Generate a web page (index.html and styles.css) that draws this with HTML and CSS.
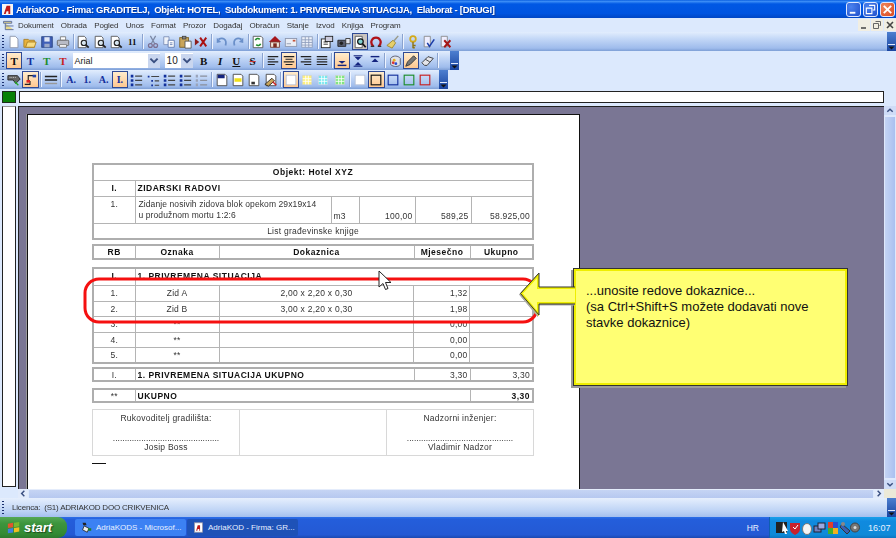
FILE: index.html
```html
<!DOCTYPE html>
<html lang="hr">
<head>
<meta charset="utf-8">
<title>AdriaKOD</title>
<link rel="stylesheet" href="styles.css">
</head>
<body>
<svg class="sprite" xmlns="http://www.w3.org/2000/svg">
<symbol id="new" viewBox="0 0 16 16"><path d="M3.500 1.500h6l3 3v10h-9z" fill="#fff" stroke="#8a93a8"/></symbol>
<symbol id="open" viewBox="0 0 16 16"><path d="M1 5h5l1 1h6v8H1z" fill="#e8b23c" stroke="#a97f24"/><path d="M3 14l2-6h10l-2 6z" fill="#f8dc80" stroke="#a97f24"/></symbol>
<symbol id="save" viewBox="0 0 16 16"><rect x="2" y="2" width="12" height="12" fill="#3f5fb8" stroke="#26407f"/><rect x="5" y="2.500" width="6" height="5" fill="#dfe6f5"/><rect x="5" y="10" width="6" height="4" fill="#9aa8c8"/></symbol>
<symbol id="print" viewBox="0 0 16 16"><path d="M5 2h6v4H5z" fill="#fff" stroke="#777"/><rect x="1.500" y="6" width="13" height="6" rx="1" fill="#b9bcc6" stroke="#666"/><path d="M4 11h8v3H4z" fill="#fff" stroke="#777"/></symbol>
<symbol id="prev" viewBox="0 0 16 16"><path d="M2.500 1.500h7l2 2v11h-9z" fill="#fff" stroke="#555"/><circle cx="9" cy="9" r="3" fill="#d8e6f0" stroke="#222" stroke-width="1.300"/><path d="M11 11l3.500 3.500" stroke="#222" stroke-width="2"/></symbol>
<symbol id="cut" viewBox="0 0 16 16"><path d="M5 1l5 9M11 1L6 10" stroke="#7c88a4" stroke-width="1.400" fill="none"/><circle cx="5" cy="12" r="2.200" fill="none" stroke="#7c6f90" stroke-width="1.400"/><circle cx="11" cy="12" r="2.200" fill="none" stroke="#7c6f90" stroke-width="1.400"/></symbol>
<symbol id="copy" viewBox="0 0 16 16"><path d="M2 2h6v9H2z" fill="#eef2fa" stroke="#7d8fb5"/><path d="M7 6h7v8H7z" fill="#fff" stroke="#5f78ad"/><path d="M9 9h3M9 11h3" stroke="#5f78ad"/></symbol>
<symbol id="paste" viewBox="0 0 16 16"><rect x="2" y="3" width="10" height="11" fill="#c9a55b" stroke="#7c6224"/><rect x="5" y="1.500" width="4" height="3" fill="#888" stroke="#444"/><path d="M8 7h7v8H8z" fill="#fff" stroke="#555"/></symbol>
<symbol id="del" viewBox="0 0 16 16"><path d="M1 4l5 4-5 4z" fill="#8c1c1c"/><path d="M7 3l7 10M14 3L7 13" stroke="#a11" stroke-width="2.200"/></symbol>
<symbol id="undo" viewBox="0 0 16 16"><path d="M4 5c5-3 10 0 8 7" fill="none" stroke="#6a8fc9" stroke-width="2"/><path d="M2 3v6l5-1z" fill="#6a8fc9"/></symbol>
<symbol id="redo" viewBox="0 0 16 16"><path d="M12 5C7 2 2 5 4 12" fill="none" stroke="#6a8fc9" stroke-width="2"/><path d="M14 3v6L9 8z" fill="#6a8fc9"/></symbol>
<symbol id="refresh" viewBox="0 0 16 16"><path d="M2.500 1.500h9l2 2v11h-11z" fill="#fff" stroke="#555"/><path d="M5 6a3 3 0 0 1 5-1M11 10a3 3 0 0 1-5 1" fill="none" stroke="#1c8d2a" stroke-width="1.800"/></symbol>
<symbol id="home" viewBox="0 0 16 16"><path d="M8 1L1 8h14z" fill="#a5161c"/><rect x="3" y="8" width="10" height="6" fill="#efe6d8" stroke="#7a3a30"/><rect x="6" y="9.500" width="4" height="4.500" fill="#7a2a20"/></symbol>
<symbol id="mail" viewBox="0 0 16 16"><rect x="1.500" y="4" width="13" height="9" fill="#e9edf6" stroke="#8c96ac"/><rect x="10" y="5.500" width="3" height="2" fill="#c6553c"/><path d="M3 10h5" stroke="#8c96ac"/></symbol>
<symbol id="table" viewBox="0 0 16 16"><rect x="2" y="2" width="12" height="12" fill="#eef2fa" stroke="#8e9dbb"/><path d="M2 5.500h12M2 8.500h12M2 11.500h12M6 2v12M10 2v12" stroke="#8e9dbb"/></symbol>
<symbol id="props" viewBox="0 0 16 16"><rect x="1.500" y="4.500" width="10" height="10" fill="#fff" stroke="#222"/><rect x="6" y="1.500" width="8.500" height="6" fill="#ccd" stroke="#222"/><path d="M4 8h5M4 10.500h5" stroke="#222"/></symbol>
<symbol id="cam" viewBox="0 0 16 16"><path d="M1 6h9v7H1z" fill="#5a5f70" stroke="#222"/><path d="M10 4h5v6h-5z" fill="#e4e6ee" stroke="#333"/><circle cx="5" cy="9.500" r="2" fill="#222"/></symbol>
<symbol id="search" viewBox="0 0 16 16"><path d="M2.500 1.500h8v13h-8z" fill="#fff" stroke="#555"/><circle cx="8.500" cy="7.500" r="3.200" fill="#7fd0d0" stroke="#111" stroke-width="1.400"/><path d="M11 10l3.500 4" stroke="#111" stroke-width="2"/></symbol>
<symbol id="omega" viewBox="0 0 16 16"><path d="M5 13C0 8 4 3 8 3s8 5 3 10" fill="none" stroke="#b01218" stroke-width="2.600"/><path d="M2 13h4M10 13h4" stroke="#333" stroke-width="1.600"/></symbol>
<symbol id="broom" viewBox="0 0 16 16"><path d="M14 1L8 8" stroke="#998" stroke-width="1.600"/><path d="M8 6l3 3-4 6-6-3z" fill="#e6cf6a" stroke="#9b8630"/></symbol>
<symbol id="key" viewBox="0 0 16 16"><circle cx="8" cy="4.500" r="3.200" fill="none" stroke="#d3a91a" stroke-width="2"/><path d="M8 8v7M8 12h3M8 14.500h2" stroke="#8d7312" stroke-width="1.600"/></symbol>
<symbol id="check" viewBox="0 0 16 16"><path d="M2.500 1.500h7v12h-7z" fill="#eef" stroke="#888"/><path d="M6 9l2.500 4L14 5" fill="none" stroke="#1c3da8" stroke-width="1.800"/></symbol>
<symbol id="xdoc" viewBox="0 0 16 16"><path d="M2.500 1.500h7v12h-7z" fill="#eef" stroke="#888"/><path d="M6 6l7 8M13 6l-7 8" stroke="#a51616" stroke-width="2.200"/></symbol>
<symbol id="al" viewBox="0 0 16 16"><path d="M2 3h12M2 6h8M2 9h12M2 12h8" stroke="#222" stroke-width="1.300"/></symbol>
<symbol id="ac" viewBox="0 0 16 16"><path d="M2 3h12M4 6h8M2 9h12M4 12h8" stroke="#222" stroke-width="1.300"/></symbol>
<symbol id="ar" viewBox="0 0 16 16"><path d="M2 3h12M6 6h8M2 9h12M6 12h8" stroke="#222" stroke-width="1.300"/></symbol>
<symbol id="aj" viewBox="0 0 16 16"><path d="M2 3h12M2 6h12M2 9h12M2 12h12" stroke="#222" stroke-width="1.300"/></symbol>
<symbol id="vb" viewBox="0 0 16 16"><path d="M3 13h10" stroke="#14247e" stroke-width="1.600"/><path d="M4 8h8l-4 3z" fill="#14247e"/></symbol>
<symbol id="vm" viewBox="0 0 16 16"><path d="M3 2h10M3 14h10" stroke="#14247e" stroke-width="1.400"/><path d="M8 7L4 3h8zM8 9l4 4H4z" fill="#14247e"/></symbol>
<symbol id="vt" viewBox="0 0 16 16"><path d="M3 3h10" stroke="#14247e" stroke-width="1.600"/><path d="M4 9h8L8 5z" fill="#14247e"/></symbol>
<symbol id="color" viewBox="0 0 16 16"><path d="M3 5c3-4 9-3 11 0v7c-2 3-8 3-11 0z" fill="#dfe3ea" stroke="#556"/><circle cx="6" cy="10" r="1.600" fill="#d33"/><circle cx="9" cy="11" r="1.600" fill="#2a4fd0"/><circle cx="7" cy="7" r="1.600" fill="#e8b020"/></symbol>
<symbol id="pen" viewBox="0 0 16 16"><path d="M2 14l2-5 7-7 3 3-7 7z" fill="#777" stroke="#333"/></symbol>
<symbol id="erase" viewBox="0 0 16 16"><path d="M1 10l7-7 6 2-7 8H4z" fill="#e5e5ea" stroke="#333"/><path d="M5 6l5 3" stroke="#333"/></symbol>
<symbol id="stamp" viewBox="0 0 16 16"><path d="M1 3h11l3 4-5 5-3-4H1z" fill="#666" stroke="#222"/><path d="M3 5h7" stroke="#ddd" stroke-dasharray="1 1"/><path d="M9 10l4 4" stroke="#2a2" stroke-width="1.400"/></symbol>
<symbol id="tree" viewBox="0 0 16 16"><path d="M6 9V3h8M2 13h6v-4" fill="none" stroke="#222" stroke-width="1.300"/><rect x="4" y="8" width="4" height="3" fill="#d22"/><rect x="11" y="2" width="4" height="3" fill="#2244a8"/></symbol>
<symbol id="lines" viewBox="0 0 16 16"><path d="M1 4h14M1 8h14" stroke="#222" stroke-width="1.600"/><path d="M1 12h14" stroke="#999" stroke-width="1.600"/></symbol>
<symbol id="l1" viewBox="0 0 16 16"><path d="M2 2h3v3H2zM2 7h3v3H2zM2 12h3v3H2z" fill="#12309c"/><path d="M7 3.500h8M7 8.500h8M7 13.500h8" stroke="#444" stroke-width="1.300"/></symbol>
<symbol id="l2" viewBox="0 0 16 16"><path d="M2 3h2v2H2zM6 8h2v2H6zM6 13h2v2H6z" fill="#12309c"/><path d="M6 4h9M10 9h5M10 14h5" stroke="#444" stroke-width="1.300"/></symbol>
<symbol id="l3" viewBox="0 0 16 16"><path d="M2 2h2.500v3H2zM2 7h2.500v3H2zM2 12h2.500v3H2z" fill="#9aa3b8"/><path d="M7 3.500h8M7 8.500h8M7 13.500h8" stroke="#8a8f9c" stroke-width="1.300"/></symbol>
<symbol id="d1" viewBox="0 0 16 16"><path d="M2.500 1.500h9l2 2v11h-11z" fill="#fff" stroke="#444"/><rect x="3" y="2" width="8" height="4" fill="#14247e"/></symbol>
<symbol id="d2" viewBox="0 0 16 16"><path d="M2.500 1.500h9l2 2v11h-11z" fill="#fff" stroke="#444"/><rect x="4" y="6" width="8" height="4" fill="#f0e01a"/></symbol>
<symbol id="d3" viewBox="0 0 16 16"><path d="M2.500 1.500h9l2 2v11h-11z" fill="#fff" stroke="#444"/><rect x="5" y="10" width="4" height="3" fill="#333"/></symbol>
<symbol id="d4" viewBox="0 0 16 16"><path d="M2.500 1.500h9l2 2v11h-11z" fill="#fff" stroke="#444"/><path d="M1 13l8-7 3 3-7 6z" fill="#c9a55b" stroke="#222"/><path d="M10 10l4 4" stroke="#c22" stroke-width="1.600"/></symbol>
<symbol id="fill" viewBox="0 0 16 16"><rect x="2.500" y="2.500" width="11" height="11" fill="#fff" stroke="#b8c2d8"/></symbol>
<symbol id="fy" viewBox="0 0 16 16"><rect x="3" y="3" width="10" height="10" fill="#fff27a" stroke="#d8d8c0"/><path d="M6.500 3v10M9.500 3v10M3 6.500h10M3 9.500h10" stroke="#fff"/></symbol>
<symbol id="fc" viewBox="0 0 16 16"><rect x="3" y="3" width="10" height="10" fill="#6fe8f0" stroke="#c8d8e0"/><path d="M6.500 3v10M9.500 3v10M3 6.500h10M3 9.500h10" stroke="#fff"/></symbol>
<symbol id="fg" viewBox="0 0 16 16"><rect x="3" y="3" width="10" height="10" fill="#7ce87c" stroke="#c8d8c8"/><path d="M6.500 3v10M9.500 3v10M3 6.500h10M3 9.500h10" stroke="#fff"/></symbol>
<symbol id="bk" viewBox="0 0 16 16"><rect x="2.500" y="2.500" width="11" height="11" fill="none" stroke="#111" stroke-width="1.300"/></symbol>
<symbol id="bb" viewBox="0 0 16 16"><rect x="2.500" y="2.500" width="11" height="11" fill="none" stroke="#14309c" stroke-width="1.300"/></symbol>
<symbol id="bg" viewBox="0 0 16 16"><rect x="2.500" y="2.500" width="11" height="11" fill="none" stroke="#1c8d2a" stroke-width="1.300"/></symbol>
<symbol id="br" viewBox="0 0 16 16"><rect x="2.500" y="2.500" width="11" height="11" fill="none" stroke="#c81e1e" stroke-width="1.300"/></symbol>
<symbol id="chev" viewBox="0 0 9 18"><path d="M1 12h7" stroke="#dfe8fb"/><path d="M1.500 14h6L4.500 17z" fill="#111"/></symbol>
</svg>

<header class="titlebar">
  <svg class="appicon" viewBox="0 0 12 12"><rect width="12" height="12" fill="#f5f5f5"/><path d="M2 11l3-9h4v9H7V8H5l-1 3z" fill="#c01818"/></svg>
  <span class="title">AdriaKOD - Firma: GRADITELJ,  Objekt: HOTEL,  Subdokument: 1. PRIVREMENA SITUACIJA,  Elaborat - [DRUGI]</span>
  <div class="winbtns">
    <span class="wb"><svg viewBox="0 0 14 14"><path d="M3 10.500h6" stroke="#fff" stroke-width="2"/></svg></span>
    <span class="wb"><svg viewBox="0 0 14 14"><path d="M5.500 2.500h6v5h-2M2.500 5.500h6v6h-6z" fill="none" stroke="#fff" stroke-width="1.200"/></svg></span>
    <span class="wb close"><svg viewBox="0 0 14 14"><path d="M3 3l8 8M11 3l-8 8" stroke="#fff" stroke-width="2"/></svg></span>
  </div>
</header>

<nav class="menubar">
  <svg class="menuicon" viewBox="0 0 12 12"><path d="M.5 1.500h9v2h-9zM2.500 3.500v7h9M2.500 6.500h9" fill="#e8d98c" stroke="#5a6b9c"/></svg>
  <span class="m m1">Dokument</span><span class="m">Obrada</span><span class="m">Pogled</span><span class="m">Unos</span><span class="m">Format</span><span class="m">Prozor</span><span class="m">Događaj</span><span class="m">Obračun</span><span class="m">Stanje</span><span class="m">Izvod</span><span class="m">Knjiga</span><span class="m">Program</span>
  <div class="mdibtns">
    <span class="mdi"><svg viewBox="0 0 12 12"><path d="M3 9h5" stroke="#444" stroke-width="1.500"/></svg></span>
    <span class="mdi"><svg viewBox="0 0 12 12"><path d="M4.500 2.500h5v4h-1M2.500 4.500h5v5h-5z" fill="none" stroke="#666"/></svg></span>
    <span class="mdi"><svg viewBox="0 0 12 12"><path d="M3 3l6 6M9 3l-6 6" stroke="#444" stroke-width="1.600"/></svg></span>
  </div>
</nav>

<div class="tb tb1">
  <i class="grip"></i>
  <span class="b"><svg><use href="#new"/></svg></span><span class="b"><svg><use href="#open"/></svg></span><span class="b"><svg><use href="#save"/></svg></span><span class="b"><svg><use href="#print"/></svg></span><i class="s"></i>
  <span class="b"><svg><use href="#prev"/></svg></span><span class="b"><svg><use href="#prev"/></svg></span><span class="b"><svg><use href="#prev"/></svg></span><span class="b num">11</span><i class="s"></i>
  <span class="b"><svg><use href="#cut"/></svg></span><span class="b"><svg><use href="#copy"/></svg></span><span class="b"><svg><use href="#paste"/></svg></span><span class="b"><svg><use href="#del"/></svg></span><i class="s"></i>
  <span class="b"><svg><use href="#undo"/></svg></span><span class="b"><svg><use href="#redo"/></svg></span><i class="s"></i>
  <span class="b"><svg><use href="#refresh"/></svg></span><span class="b"><svg><use href="#home"/></svg></span><span class="b"><svg><use href="#mail"/></svg></span><span class="b"><svg><use href="#table"/></svg></span><i class="s"></i>
  <span class="b"><svg><use href="#props"/></svg></span><span class="b"><svg><use href="#cam"/></svg></span><span class="b on grey"><svg><use href="#search"/></svg></span><span class="b"><svg><use href="#omega"/></svg></span><span class="b"><svg><use href="#broom"/></svg></span><i class="s"></i>
  <span class="b"><svg><use href="#key"/></svg></span><span class="b"><svg><use href="#check"/></svg></span><span class="b"><svg><use href="#xdoc"/></svg></span>
  <span class="chev end"><svg><use href="#chev"/></svg></span>
</div>

<div class="tb tb2">
  <i class="grip"></i>
  <span class="b on ser">T</span><span class="b ser blue">T</span><span class="b ser green">T</span><span class="b ser red">T</span>
  <span class="sel font"><span class="val">Arial</span><span class="arr"><svg viewBox="0 0 10 10"><path d="M2 3l3 3 3-3" fill="none" stroke="#3a4f80" stroke-width="1.600"/></svg></span></span>
  <span class="sel size"><span class="val">10</span><span class="arr"><svg viewBox="0 0 10 10"><path d="M2 3l3 3 3-3" fill="none" stroke="#3a4f80" stroke-width="1.600"/></svg></span></span>
  <span class="b ser bold">B</span><span class="b ser ital">I</span><span class="b ser und">U</span><span class="b ser str">S</span><i class="s"></i>
  <span class="b"><svg><use href="#al"/></svg></span><span class="b on"><svg><use href="#ac"/></svg></span><span class="b"><svg><use href="#ar"/></svg></span><span class="b"><svg><use href="#aj"/></svg></span><i class="s"></i>
  <span class="b on"><svg><use href="#vb"/></svg></span><span class="b"><svg><use href="#vm"/></svg></span><span class="b"><svg><use href="#vt"/></svg></span><i class="s"></i>
  <span class="b"><svg><use href="#color"/></svg></span><span class="b on"><svg><use href="#pen"/></svg></span><span class="b"><svg><use href="#erase"/></svg></span><i class="s"></i>
  <span class="chev end"><svg><use href="#chev"/></svg></span>
</div>

<div class="tb tb3">
  <i class="grip"></i>
  <span class="b"><svg><use href="#stamp"/></svg></span><span class="b on"><svg><use href="#tree"/></svg></span><i class="s"></i>
  <span class="b"><svg><use href="#lines"/></svg></span><i class="s"></i>
  <span class="b ser blue sm">A.</span><span class="b ser blue sm">1.</span><span class="b ser blue sm">A.</span><span class="b on ser blue sm">I.</span><span class="b"><svg><use href="#l1"/></svg></span><span class="b"><svg><use href="#l2"/></svg></span><span class="b"><svg><use href="#l1"/></svg></span><span class="b"><svg><use href="#l1"/></svg></span><span class="b"><svg><use href="#l3"/></svg></span><i class="s"></i>
  <span class="b"><svg><use href="#d1"/></svg></span><span class="b"><svg><use href="#d2"/></svg></span><span class="b"><svg><use href="#d3"/></svg></span><span class="b"><svg><use href="#d4"/></svg></span><i class="s"></i>
  <span class="b on"><svg><use href="#fill"/></svg></span><span class="b"><svg><use href="#fy"/></svg></span><span class="b"><svg><use href="#fc"/></svg></span><span class="b"><svg><use href="#fg"/></svg></span><i class="s"></i>
  <span class="b"><svg><use href="#fill"/></svg></span><span class="b on"><svg><use href="#bk"/></svg></span><span class="b"><svg><use href="#bb"/></svg></span><span class="b"><svg><use href="#bg"/></svg></span><span class="b"><svg><use href="#br"/></svg></span>
  <span class="chev end"><svg><use href="#chev"/></svg></span>
</div>

<div class="fieldrow"><span class="led"></span><span class="field"></span></div>

<div class="work">
  <div class="ruler"></div>
  <div class="center">
    <main class="canvas">
      <article class="paper">
        <table class="t">
          <colgroup><col class="w42"><col class="w196"><col class="w28"><col class="w56"><col class="w56"><col></colgroup>
          <tr class="h16"><td colspan="6" class="c bd">Objekt: Hotel XYZ</td></tr>
          <tr class="h16"><td class="c bd">I.</td><td colspan="5" class="bd">ZIDARSKI RADOVI</td></tr>
          <tr class="h27"><td class="c top">1.</td><td class="two">Zidanje nosivih zidova blok opekom 29x19x14<br>u produžnom mortu 1:2:6</td><td class="bot">m3</td><td class="r bot">100,00</td><td class="r bot">589,25</td><td class="r bot">58.925,00</td></tr>
          <tr class="h15"><td colspan="6" class="c">List građevinske knjige</td></tr>
        </table>
        <table class="t gap4">
          <colgroup><col class="w42"><col class="w84"><col><col class="w56"><col class="w63"></colgroup>
          <tr class="h14 bd"><td class="c">RB</td><td class="c">Oznaka</td><td class="c">Dokaznica</td><td class="c">Mjesečno</td><td class="c">Ukupno</td></tr>
        </table>
        <table class="t gap7">
          <colgroup><col class="w42"><col class="w84"><col><col class="w56"><col class="w63"></colgroup>
          <tr class="h18"><td class="c bd top">I.</td><td colspan="4" class="bd top">1. PRIVREMENA SITUACIJA</td></tr>
          <tr class="h15"><td class="c">1.</td><td class="c">Zid A</td><td class="c">2,00 x 2,20 x 0,30</td><td class="r">1,32</td><td></td></tr>
          <tr class="h15"><td class="c">2.</td><td class="c">Zid B</td><td class="c">3,00 x 2,20 x 0,30</td><td class="r">1,98</td><td></td></tr>
          <tr class="h15"><td class="c">3.</td><td class="c">**</td><td></td><td class="r">0,00</td><td></td></tr>
          <tr class="h15"><td class="c">4.</td><td class="c">**</td><td></td><td class="r">0,00</td><td></td></tr>
          <tr class="h15"><td class="c">5.</td><td class="c">**</td><td></td><td class="r">0,00</td><td></td></tr>
        </table>
        <table class="t gap3">
          <colgroup><col class="w42"><col><col class="w56"><col class="w63"></colgroup>
          <tr class="h13"><td class="c">I.</td><td class="bd">1. PRIVREMENA SITUACIJA UKUPNO</td><td class="r">3,30</td><td class="r">3,30</td></tr>
        </table>
        <table class="t gap6">
          <colgroup><col class="w42"><col><col class="w63"></colgroup>
          <tr class="h13"><td class="c">**</td><td class="bd">UKUPNO</td><td class="r bd">3,30</td></tr>
        </table>
        <table class="t sign gap6">
          <tr>
            <td class="c"><p>Rukovoditelj gradilišta:</p><p class="dots">.............................................</p><p>Josip Boss</p></td>
            <td></td>
            <td class="c"><p>Nadzorni inženjer:</p><p class="dots">.............................................</p><p>Vladimir Nadzor</p></td>
          </tr>
        </table>
        <div class="rule"></div>
      </article>
    </main>
    <div class="hscroll">
      <span class="sbtn"><svg viewBox="0 0 10 10"><path d="M6.500 2L3.500 5l3 3" fill="none" stroke="#3a4f80" stroke-width="1.600"/></svg></span>
      <span class="hthumb"></span>
      <span class="sbtn"><svg viewBox="0 0 10 10"><path d="M3.500 2l3 3-3 3" fill="none" stroke="#3a4f80" stroke-width="1.600"/></svg></span>
    </div>
  </div>
  <div class="vscroll">
    <span class="vbtn"><svg viewBox="0 0 10 10"><path d="M2 6.500l3-3 3 3" fill="none" stroke="#3a4f80" stroke-width="1.600"/></svg></span>
    <span class="vthumb"></span>
    <span class="vbtn"><svg viewBox="0 0 10 10"><path d="M2 3.500l3 3 3-3" fill="none" stroke="#3a4f80" stroke-width="1.600"/></svg></span>
    <span class="corner"></span>
  </div>
</div>

<div class="status">
  <i class="grip"></i>
  <span class="stext">Licenca:  (S1) ADRIAKOD DOO CRIKVENICA</span>
  <span class="chev end"><svg><use href="#chev"/></svg></span>
</div>

<footer class="taskbar">
  <div class="start">
    <svg class="flag" viewBox="0 0 16 16"><path d="M1 3l6-1v5l-6 1z" fill="#e2552c"/><path d="M8 2l6-1v5l-6 1z" fill="#7ab82e"/><path d="M1 9l6-1v5l-6 1z" fill="#3f7fe0"/><path d="M8 8l6-1v5l-6 1z" fill="#f0c020"/></svg>
    <span>start</span>
  </div>
  <div class="task active">
    <svg viewBox="0 0 14 14"><path d="M2 1h4l1 3H3z" fill="#222"/><path d="M4 5l6 3-2 5-6-3z" fill="#eee" stroke="#222"/><path d="M9 8h4v3H9z" fill="#1c7d2a"/></svg>
    <span>AdriaKODS - Microsof...</span>
  </div>
  <div class="task">
    <svg viewBox="0 0 14 14"><rect x="2" y="1" width="10" height="12" fill="#fff" stroke="#99a"/><path d="M4 11l2-7h3v7H8V9H6l-.5 2z" fill="#c01818"/></svg>
    <span>AdriaKOD - Firma: GR...</span>
  </div>
  <span class="lang">HR</span>
  <div class="tray">
    <svg viewBox="0 0 84 14" class="trayicons">
      <rect x="0" y="1" width="11" height="11" fill="#222"/><path d="M7 1l5 9-2 0 1 3-2 0-1-3-2 1z" fill="#fff"/>
      <path d="M14 2h10v6c0 3-3 5-5 6-2-1-5-3-5-6z" fill="#c8202c"/><path d="M17 6l2 2 3-4" stroke="#fff" fill="none"/>
      <ellipse cx="31" cy="8" rx="4.500" ry="5.500" fill="#f4f4f4" stroke="#777"/>
      <rect x="38" y="5" width="7" height="6" fill="#7080c0" stroke="#223"/><rect x="42" y="2" width="7" height="6" fill="#9aa8e0" stroke="#223"/>
      <rect x="52" y="1" width="5" height="6" fill="#e0402a"/><rect x="57" y="1" width="5" height="6" fill="#2a4fd0"/><rect x="52" y="7" width="5" height="6" fill="#40b030"/><rect x="57" y="7" width="5" height="6" fill="#f0b020"/>
      <path d="M66 3l8 7-3 3-7-7z" fill="#3a5fb0" stroke="#333"/><circle cx="67" cy="3" r="2" fill="#888"/>
      <circle cx="79" cy="6.500" r="4.500" fill="#777" stroke="#444"/><circle cx="79" cy="6.500" r="1.500" fill="#ddd"/>
    </svg>
    <span class="clock">16:07</span>
  </div>
</footer>

<svg class="redbox" viewBox="0 0 456 48"><rect x="2" y="2" width="452" height="43" rx="14" fill="none" stroke="#f51010" stroke-width="3"/></svg>
<svg class="pointer" viewBox="0 0 14 21"><path d="M1 1v16l4-3.500 2.500 6 2.500-1-2.500-6H13z" fill="#fff" stroke="#222"/></svg>
<aside class="callout">...unosite redove dokaznice...<br>(sa Ctrl+Shift+S možete dodavati nove<br>stavke dokaznice)</aside>
<svg class="arrow" viewBox="0 0 56 44"><path d="M1.500 21.500L18 3.500v12.500h38v15H18v10.500z" fill="#ffff73" stroke="#eeee00" stroke-width="2"/><path d="M.5 21.500L19 1v14h36M55 32H19v11L.5 21.500" fill="none" stroke="#333"/></svg>
</body>
</html>
```
FILE: styles.css
```css
*{box-sizing:border-box}
html,body{margin:0;padding:0}
body{width:896px;height:538px;overflow:hidden;position:relative;display:flex;flex-direction:column;background:#dce9fd;font-family:"Liberation Sans",Arial,sans-serif;color:#111}
.sprite{position:absolute;width:0;height:0}
i{display:block;font-style:normal}

.titlebar{height:18px;flex:none;display:flex;align-items:center;padding-left:2px;background:linear-gradient(#0a5fe0 0,#3a8cf6 8%,#0058e4 22%,#0054e0 75%,#0046c4 100%);color:#fff}
.appicon{width:11px;height:11px;flex:none}
.title{margin-left:3px;font-size:9.500px;font-weight:bold;letter-spacing:-.3px;white-space:pre;filter:blur(.25px);text-shadow:1px 1px 0 #0a3a9c}
.winbtns{margin-left:auto;display:flex;gap:2px;padding-right:1px}
.wb{width:15px;height:15px;border:1px solid #dfe8ff;border-radius:3px;background:radial-gradient(circle at 30% 30%,#4b82ee,#2050cc);display:block}
.wb svg{display:block;width:13px;height:13px}
.wb.close{background:radial-gradient(circle at 30% 30%,#ee8a60,#d9441c)}

.menubar{height:14px;flex:none;display:flex;align-items:center;padding-left:3px;font-size:8px;color:#333}
.menuicon{width:11px;height:11px;flex:none}
.m{margin-right:7.200px;white-space:nowrap;letter-spacing:-.1px;filter:blur(.25px)}
.m1{margin-left:4px}
.mdibtns{margin-left:auto;display:flex;gap:1px}
.mdi{width:12px;height:12px;background:#f1eee2;display:block}
.mdi svg{display:block;width:12px;height:12px}

.tb{height:19px;flex:none;display:flex;align-items:center;padding-left:2px;background:linear-gradient(#e2edfd 0,#c4d8f7 35%,#9fbcec 85%,#7e9fd6 100%);position:relative}
.tb2{width:459px}
.tb3{width:448px}
.grip{width:2px;height:13px;margin-right:2px;background:repeating-linear-gradient(#1a2f6e 0 1px,transparent 1px 3px)}
.s{width:1px;height:15px;background:#8aa3cf;box-shadow:1px 0 0 #eef4ff;margin:0 1.500px}
.b{width:16.300px;height:17px;flex:none;display:flex;align-items:center;justify-content:center;border:1px solid transparent}
.b svg{width:14px;height:14px;display:block;flex:none;filter:blur(.3px)}
.b.on{background:linear-gradient(#ffeccc,#ffc890);border-color:#2f4a94}
.b.on.grey{background:#c9c4c0}
.num{font:bold 9px "Liberation Serif",serif;color:#111}
.ser{font:bold 11px "Liberation Serif",serif;color:#111}
.blue{color:#14309c}
.green{color:#1c8d2a}
.red{color:#c81e1e}
.sm{font-size:10px}
.ital{font-style:italic}
.und{text-decoration:underline}
.str{text-decoration:line-through;text-decoration-color:#c33}
.sel{height:15px;background:#fff;display:flex;align-items:center;font-size:9px;color:#222;flex:none}
.sel .val{flex:1;padding-left:2px}
.arr{width:12px;height:14px;background:#c9d6ef;display:block}
.arr svg{display:block;width:12px;height:14px}
.font{width:87px;margin-left:1.400px}
.size{width:28px;margin:0 3px 0 5px;font-size:10px}
.chev{width:9px;height:100%;background:linear-gradient(#4d7fd0,#1a45a0);display:block;flex:none}
.chev svg{display:block;width:9px;height:100%}
.end{margin-left:auto}

.fieldrow{height:15px;flex:none;display:flex;padding:2px 12px 0 2px;gap:3px;background:#dce9fd}
.led{width:14px;height:12px;background:#068106;border:1px solid #1c2c1c}
.field{flex:1;height:12px;background:#fff;border:1px solid #222}

.work{flex:1;min-height:0;display:flex;padding-top:2px;background:#dce9fd}
.ruler{width:14px;margin:0 2px;height:381px;background:#fff;border:1px solid #222;border-top-color:#999}
.center{flex:1;min-width:0;display:flex;flex-direction:column}
.canvas{flex:1;min-height:0;overflow:hidden;background:#7a7694;border-top:1px solid #222;border-left:1px solid #222;padding:7px 0 0 8px}
.paper{width:553px;height:400px;background:#fff;border:1px solid #111;padding:48px 46px 0 64px;box-shadow:-1px 0 0 #999}
.hscroll{height:9px;flex:none;display:flex;background:#dce9fd}
.sbtn{width:10px;height:9px;background:#e2ebfb;display:block}
.sbtn svg{display:block;width:10px;height:9px}
.hthumb{flex:1;background:linear-gradient(#c5d4f4,#b6c8f0);margin:0 1px;border-top:1px solid #e4ecfb}
.vscroll{width:12px;flex:none;display:flex;flex-direction:column}
.vbtn{height:9px;flex:none;background:#cfdcf7;display:block}
.vbtn svg{display:block;width:12px;height:9px}
.vthumb{flex:1;background:linear-gradient(90deg,#c5d4f4,#a9c0f0);margin:1px 0;border:1px solid #dfe8fb}
.corner{height:9px;flex:none;background:#ece9d8}

.t{width:442px;table-layout:fixed;border-collapse:collapse;border:2px solid #aeaeae;font-size:8.500px;color:#333;background:#fff}
.t td{border:1px solid #b4b4b4;padding:0 2px;overflow:hidden;white-space:nowrap;line-height:10px;letter-spacing:.25px;filter:blur(.25px)}
.h13 td{height:13px}
.h14 td{height:14px}
.h15 td{height:15.500px}
.h16 td{height:16px}
.h18 td{height:18px}
.h27 td{height:27px}
.c{text-align:center}
.r{text-align:right}
.t .bd,.t .bd td{font-weight:bold;color:#111;letter-spacing:.5px}
.t .top{vertical-align:top;padding-top:2px}
.t .bot{vertical-align:bottom;padding-bottom:2px}
.t .two{line-height:11px;padding-left:3px;letter-spacing:.1px}
.w42{width:42px}
.w84{width:84px}
.w196{width:196px}
.w28{width:28px}
.w56{width:56px}
.w63{width:63px}
.gap3{margin-top:3px}
.gap4{margin-top:4px}
.gap6{margin-top:6px}
.gap7{margin-top:7px}
.sign{border-width:1px;border-color:#d8d8d8}
.t.sign td{border-color:#d8d8d8;height:46px;vertical-align:top;padding-top:3px;width:147px}
.sign p{margin:0;line-height:11px}
.t .sign .dots,.sign .dots{margin-top:10px;letter-spacing:0;line-height:8px;height:8px}
.rule{width:14px;height:1px;background:#111;margin-top:7px}

.status{height:19px;flex:none;display:flex;align-items:center;padding-left:2px;background:linear-gradient(#e6effd,#bcd2f5 70%,#a4bfee)}
.stext{margin-left:6px;font-size:8px;white-space:pre;color:#333;letter-spacing:-.2px;filter:blur(.25px)}

.taskbar{height:21px;flex:none;display:flex;align-items:center;background:linear-gradient(#2c6fe8 0,#245edb 12%,#2459d4 85%,#1c48b0 100%);color:#e8f0ff;font-size:8px}
.start{width:67px;height:100%;display:flex;align-items:center;gap:3px;padding-left:7px;background:linear-gradient(#55a855,#3d953d 30%,#338a33 80%,#2d7a2d);border-radius:0 9px 9px 0;color:#fff;font:italic bold 13px "Liberation Sans",sans-serif;text-shadow:1px 1px 1px #1c4a1c}
.flag{width:14px;height:14px;flex:none}
.task{width:111px;height:17px;display:flex;align-items:center;gap:4px;padding-left:6px;background:#1e52b7;border-radius:2px;white-space:nowrap;overflow:hidden}
.task svg{width:11px;height:11px;flex:none}
.task.active{margin-left:8px;margin-right:1px;background:#3c81f3}
.lang{margin-left:auto;margin-right:10px;font-size:8.500px}
.tray{width:127px;height:100%;display:flex;align-items:center;padding-left:6px;background:linear-gradient(#1aa0ea,#108adf 20%,#0f8ad8 85%,#0d74c0);border-left:1px solid #0d5fb0}
.trayicons{width:84px;height:14px;flex:none}
.clock{margin-left:8px;font-size:9px}

.redbox{position:absolute;left:83px;top:277px;width:456px;height:48px}
.pointer{position:absolute;left:378px;top:270px;width:14px;height:21px}
.arrow{position:absolute;left:520px;top:272px;width:56px;height:44px;filter:drop-shadow(-1px 1px 0 #aaa)}
.callout{position:absolute;left:573px;top:268px;width:275px;height:118px;background:#ffff73;border:1px solid #333;outline:2px solid #eeee00;outline-offset:-3px;padding:14px 0 0 12px;font-size:13px;line-height:16px;color:#111;box-shadow:-2px 2px 0 #9a9a9a;white-space:nowrap}
```
